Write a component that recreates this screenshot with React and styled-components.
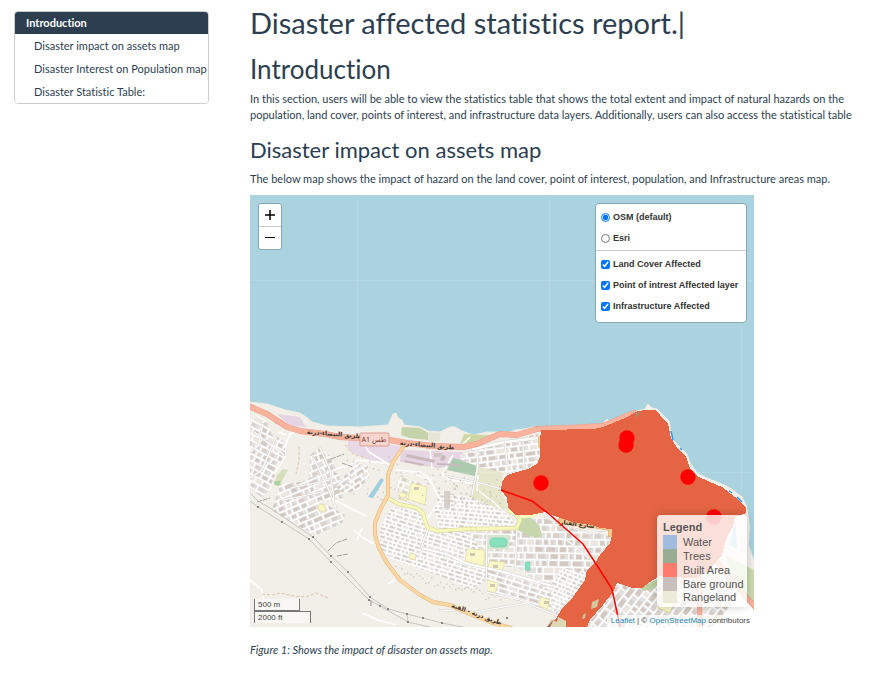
import React from "react";
import styled, { createGlobalStyle } from "styled-components";

const GlobalStyle = createGlobalStyle`
  *, *::before, *::after { box-sizing: border-box; }
  body {
    margin: 0;
    background: #fff;
    color: #2c3e50;
    font: 400 11px/16px Lato, "Liberation Sans", sans-serif;
    font-variant-ligatures: none;
  }
`;

const Page = styled.div`
  display: grid;
  grid-template-columns: 195px minmax(0, 1fr);
  column-gap: 41px;
  align-items: start;
  padding: 0 28px 0 14px;
`;

const Toc = styled.nav`
  display: flex;
  flex-direction: column;
  margin-top: 11px;
  border: 1px solid #ccc;
  border-radius: 4px;
  overflow: hidden;
`;

const TocLink = styled.a`
  padding: ${(p) => (p.$active ? "3px 0 3px 11px" : "4px 0 3px 19px")};
  line-height: 16px;
  white-space: nowrap;
  text-decoration: none;
  color: ${(p) => (p.$active ? "#fff" : "#2c3e50")};
  background: ${(p) => (p.$active ? "#2c3e50" : "#fff")};
  font-weight: ${(p) => (p.$active ? 700 : 400)};
`;

const Report = styled.main`
  display: flex;
  flex-direction: column;
`;

const Title = styled.h1`
  margin: 5px 0 0;
  font-size: 29px;
  line-height: 36px;
  font-weight: 400;
`;

const SectionTitle = styled.h2`
  margin: 12px 0 0;
  font-size: 26px;
  line-height: 32px;
  font-weight: 400;
`;

const SubTitle = styled.h3`
  margin: 11px 0 0;
  font-size: 22px;
  line-height: 32px;
  font-weight: 400;
`;

const Text = styled.p`
  margin: ${(p) => (p.$close ? 5 : 6)}px 0 0;
`;

const Figure = styled.figure`
  margin: 8px 0 0;
`;

const Caption = styled.figcaption`
  margin-top: 15px;
  font-style: italic;
`;

const MapFrame = styled.div`
  position: relative;
  max-width: 504px;
  overflow: hidden;
  background: #aad3df;
  font-family: "Liberation Sans", Arial, sans-serif;
`;

const MapSvg = styled.svg`
  display: block;
  width: 100%;
  height: auto;
`;

const ZoomBar = styled.div`
  position: absolute;
  top: 8px;
  left: 8px;
  display: flex;
  flex-direction: column;
  width: 24px;
  border: 1px solid #87a8b2;
  border-radius: 3px;
  overflow: hidden;
`;

const ZoomButton = styled.button`
  display: grid;
  place-items: center;
  height: 22px;
  padding: 0;
  border: 0;
  background: #fff;
  & + & { border-top: 1px solid #ccc; height: 23px; }
`;

const LayerPanel = styled.form`
  position: absolute;
  top: 8px;
  right: 7px;
  width: 152px;
  border: 1px solid #87a8b2;
  border-radius: 4px;
  background: #fff;
  color: #333;
  font-size: 9px;
  font-weight: 700;
`;

const LayerGroup = styled.fieldset`
  margin: 0;
  padding: ${(p) => (p.$overlays ? "3px 5px 5px" : "3px 5px 1px")};
  border: 0;
  border-top: ${(p) => (p.$overlays ? "1px solid #ccc" : "0")};
`;

const LayerLabel = styled.label`
  display: flex;
  align-items: center;
  gap: 3px;
  height: 21px;
  line-height: 21px;
  white-space: nowrap;
  input { width: 9px; height: 9px; margin: 0; accent-color: #0075ff; }
`;

const Legend = styled.section`
  position: absolute;
  right: 7px;
  bottom: 20px;
  width: 90px;
  padding: 5px 4px 4px 6px;
  border-radius: 4px;
  background: rgba(255, 255, 255, 0.8);
  box-shadow: 0 0 10px rgba(0, 0, 0, 0.2);
  color: #555;
  font-size: 11px;
`;

const LegendTitle = styled.h4`
  margin: 0 0 1px;
  font-size: 11px;
  line-height: 14px;
`;

const LegendList = styled.ul`
  margin: 0;
  padding: 0;
  list-style: none;
`;

const LegendItem = styled.li`
  display: flex;
  gap: 6px;
  line-height: 14px;
  height: 14px;
  white-space: nowrap;
  &:last-child { height: 12px; line-height: 12px; }
`;

const Swatch = styled.span`
  flex: none;
  width: 14px;
  background: ${(p) => p.$color};
`;

const Scale = styled.div`
  position: absolute;
  left: 4px;
  bottom: 4px;
  color: #444;
  font-size: 8px;
`;

const ScaleLine = styled.div`
  width: ${(p) => p.$width}px;
  height: 12px;
  padding-left: 3px;
  line-height: 12px;
  border: solid #777;
  border-width: ${(p) => (p.$lower ? "1px 1px 0" : "0 1px 1px")};
  background: rgba(255, 255, 255, 0.5);
`;

const Attribution = styled.div`
  position: absolute;
  right: 0;
  bottom: 0;
  padding: 0 4px;
  background: rgba(255, 255, 255, 0.7);
  color: #444;
  font-size: 8px;
  line-height: 12px;
  white-space: nowrap;
  a { color: #2a8ab5; text-decoration: none; }
`;

const noise = (n) => {
  const v = Math.sin(n * 12.9898) * 43758.5453;
  return v - Math.floor(v);
};

/* A district: an outline filled with streets and irregular building blocks. */
function District({ id, points, cx, cy, w, h, angle = 0, bw = 7, bh = 5, fill = "#e3e1df" }) {
  const blocks = [];
  let n = cx + cy;
  for (let y = -h / 2; y < h / 2; y += bh) {
    for (let x = -w / 2; x < w / 2; ) {
      const size = bw * (0.6 + noise(n++) * 0.9);
      const k = noise(n++);
      blocks.push(
        <g key={n}>
          <rect x={x} y={y} width={size - 1.4} height={bh - 1.5} fill={k > 0.75 ? "#ebe7e0" : fill} />
          {k < 0.8 && (
            <rect x={x + 0.6} y={y + 0.6} width={Math.max(1, (size - 2.6) * (0.5 + k * 0.6))} height={bh - 2.7} fill={k > 0.4 ? "#d3c9c2" : "#dad1cb"} />
          )}
        </g>
      );
      x += size;
    }
  }
  return (
    <g>
      <clipPath id={id}><polygon points={points} /></clipPath>
      <g clipPath={`url(#${id})`}>
        <polygon points={points} fill="#fff" />
        <g transform={`translate(${cx} ${cy}) rotate(${angle})`}>{blocks}</g>
      </g>
    </g>
  );
}

function Road({ d, width = 2, color = "#fff", casing = "#d8d4d0" }) {
  return (
    <g fill="none" strokeLinejoin="round" strokeLinecap="round">
      <path d={d} stroke={casing} strokeWidth={width + 1} />
      <path d={d} stroke={color} strokeWidth={width} />
    </g>
  );
}

const COAST =
  "M250 402L267 404 276 407 285 410 300 413 306 417 312 422 327 426 360 427 388 425 391 419 393 414 396 413 398 418 402 420 404 425 420 427 428 431 440 432 450 427 455 427 462 431 473 435 487 432 500 432 510 432 515 430 525 429 533 427 543 428 567 427 593 428 601 425 607 419 610 422 623 415 633 412 645 409 648 404 652 408 657 409 662 414 669 421 671 432 673 440 687 454 690 463 697 473 707 478 717 482 730 488 742 497 747 507 751 518 754 527V627H250Z";

const HAZARD =
  "M541 430L593 429 603 427 625 418 638 411 645 410 655 410 660 415 668 424 671 438 676 446 686 457 690 468 697 476 710 482 722 487 735 497 746 507 746 513 735 517 733 527 728 535 725 543 722 555 712 567 707 572 697 578 683 578 670 574 660 576 650 582 642 588 633 588 617 583 613 592 603 605 590 620 587 627H547L557 617 563 607 573 597 585 580 587 570 595 563 600 555 610 543 612 535 612 529 600 528 592 525 572 522 557 517 545 512 530 515 515 515 508 508 507 498 501 490 502 482 507 475 517 472 528 469 537 464 540 457 540 440Z";

const TOWERS = [
  [258, 507], [282, 522], [309, 539], [331, 562], [369, 600], [380, 606], [408, 622],
  [313, 537], [331, 556], [348, 572], [370, 597], [388, 609], [407, 614], [423, 618], [442, 623], [507, 618],
];

const MARKERS = [[541, 483], [627, 438], [626, 445], [688, 477], [714, 517]];

const SCHOOLS = [
  "467,549 485,550 484,566 465,561",
  "490,561 505,562 502,571 488,568",
  "487,580 498,583 495,593 486,590",
  "541,597 550,600 547,609 539,606",
  "411,483 427,487 425,505 408,499",
  "400,492 407,494 406,501 399,499",
  "319,504 325,505 325,512 318,510",
  "410,553 416,555 415,560 409,558",
];

function RoadName({ x, y, angle, halo = "#f5b39c", children }) {
  return (
    <text
      x={x}
      y={y}
      transform={`rotate(${angle} ${x} ${y})`}
      textAnchor="middle"
      fontFamily='"DejaVu Sans", sans-serif'
      fontSize="6"
      fontWeight="700"
      fill="#333"
      stroke={halo}
      strokeWidth="1"
      paintOrder="stroke"
    >
      {children}
    </text>
  );
}

function MapDrawing() {
  return (
    <MapSvg viewBox="250 195 504 432" role="img" aria-label="Hazard impact map of the coast">
      <rect x="250" y="195" width="504" height="432" fill="#aad3df" />
      <path d={COAST} fill="#f2efe9" stroke="#f0ece3" strokeWidth="1" />

      {/* land use */}
      <g>
        <polygon points="277,414 300,417 306,427 290,426" fill="#e6d5e2" />
        <polygon points="349,440 401,446 392,463 370,460 352,453 347,446" fill="#e8d9e6" />
        <polygon points="401,450 463,452 464,466 438,468 400,462" fill="#e6d6e3" />
        <path d="M402 427L420 428 428 433 428 440 410 438 401 435Z" fill="#c5d3aa" />
        <path d="M428 432L441 433 439 442 428 441Z" fill="#e6e5d8" />
        <path d="M464 434L485 435 500 434 490 441 475 445 460 445Z" fill="#ced7a4" />
        <polygon points="453,458 478,465 475,476 447,470" fill="#aacbaf" />
        <polygon points="477,467 503,470 501,490 508,508 495,511 470,497" fill="#e6e6ca" />
        <path d="M277 475L283 469 288 470 283 479 280 485 274 485Z" fill="#d5dfbd" />
        <path d="M274 481L281 481 279 486 275 485Z" fill="#a9d39c" />
        <path d="M381 478L384 480 373 498 368 497Z" fill="#9dcfdf" />
        <polygon points="272,418 283,420 284,426 275,424" fill="#d6dcca" />
      </g>

      {/* minor country streets */}
      <g fill="none" stroke="#fff" strokeWidth="1.5" strokeLinejoin="round">
        <path d="M286 435L278 432M283 452L290 434 300 430M270 490L272 478 285 457 283 447M360 438L369 452 385 462 392 466M332 470L350 465 357 460 384 463M335 500L350 508 366 516M362 528L357 540M354 530L362 537 374 544M395 580L388 584M250 580L262 590 264 605 262 615M362 613L378 620 396 625M453 455L442 474 450 480 480 484M410 562L419 566 430 568 440 575 452 578 470 590M425 522L440 500 430 480 410 472" />
        <path d="M478 475L477 490 495 503 502 511M460 447L470 437M395 470L420 472 432 480M430 450L432 468" />
      </g>

      <District id="west" points="250,420 258,416 268,422 271,433 282,440 286,452 278,466 270,488 263,498 250,488" cx={268} cy={458} w={110} h={110} angle={28} bw={8} bh={6} />
      <District id="north-village" points="320,448 331,457 337,472 320,480 309,476 310,455" cx={320} cy={466} w={50} h={50} angle={-22} bw={10} bh={7} />
      <District id="center-west" points="302,482 330,469 339,475 344,500 318,500 345,515 342,523 325,531 315,536 272,510 280,484" cx={310} cy={503} w={110} h={100} angle={-23} bw={9} bh={6} />
      <District id="round" points="345,475 358,462 368,466 369,477 360,489 344,494 336,487" cx={354} cy={478} w={56} h={56} angle={-35} bw={7} bh={5} />
      <District id="south" points="393,506 416,511 423,517 426,532 470,532 485,551 487,580 470,590 446,578 400,562 382,556 378,540 384,518" cx={430} cy={547} w={150} h={130} angle={17} bw={6} bh={4} />
      <District id="mid" points="398,475 425,484 427,506 398,496" cx={412} cy={490} w={60} h={55} angle={18} bw={7} bh={6} fill="#ededda" />
      <District id="old-town" points="441,493 470,497 506,512 516,524 498,529 438,529 434,510" cx={474} cy={512} w={100} h={60} angle={5} bw={5} bh={4} />
      <District id="center" points="470,532 518,530 516,568 487,563" cx={494} cy={548} w={60} h={50} angle={2} bw={8} bh={6} fill="#e6e2dc" />
      <District id="south-east" points="487,568 540,582 560,590 557,615 525,603 486,590" cx={522} cy={590} w={100} h={70} angle={17} bw={9} bh={5} />
      <District id="east" points="518,523 540,517 585,533 611,530 608,546 588,570 585,582 560,612 548,590 516,566" cx={565} cy={560} w={120} h={110} angle={1} bw={9} bh={7} />
      <District id="east-grid" points="560,568 586,572 584,581 565,607 552,612 550,588" cx={568} cy={590} w={60} h={60} angle={22} bw={5} bh={4} />
      <District id="north-east" points="460,455 478,450 505,441 538,434 540,460 528,468 507,474 480,467 462,461" cx={500} cy={455} w={100} h={60} angle={-7} bw={8} bh={6} />
      <District id="south-tip" points="617,583 642,589 670,575 754,580 754,627 585,627 603,606" cx={660} cy={605} w={210} h={110} angle={-52} bw={10} bh={7} />

      {/* industrial sheds */}
      <g fill="#c9b9bd">
        <path d="M407 454L435 460 434 463 406 457ZM405 460L424 464 423 466 404 462ZM437 463L460 464 460 466 437 465ZM442 455L446 456 444 461 440 460Z" />
        <rect x="434" y="453" width="8" height="4" fill="#cfc5c2" />
        <rect x="444" y="491" width="6" height="17" fill="#d8cfc8" />
        <rect x="370" y="600" width="2" height="6" />
      </g>

      {/* parks and pitches */}
      <path d="M518 518L530 517 539 525 542 535 536 538 519 531Z" fill="#c8d6ad" />
      <rect x="488" y="535" width="21" height="14" fill="#d3e6cf" />
      <rect x="490" y="538" width="17" height="9" rx="4" fill="#88e0be" stroke="#72c9a9" strokeWidth="0.7" />
      <rect x="525" y="562" width="5" height="8" fill="#88e0be" stroke="#72c9a9" strokeWidth="0.5" />
      <g fill="#fbf8c8" stroke="#dcd5a0" strokeWidth="0.6">
        {SCHOOLS.map((points) => <polygon key={points} points={points} />)}
      </g>
      <g fill="#d2c5b4">
        {SCHOOLS.slice(0, 5).map((points) => {
          const [x, y] = points.split(" ")[0].split(",").map(Number);
          return <rect key={points} x={x + 3} y={y + 4} width="5" height="3" />;
        })}
      </g>
      <path d="M664 596L675 601 670 613 658 608Z" fill="#fbf8c8" stroke="#dcd5a0" />
      <path d="M640 588L665 575 655 588 644 591Z" fill="#bdd1a0" />
      <path d="M725 555L754 570V610L735 585Z" fill="#cbdab0" />

      {/* scattered buildings */}
      <g fill="#d0c5bd">
        {Array.from({ length: 110 }, (_, i) => {
          const x = i % 2 ? 345 + noise(i) * 100 : 445 + noise(i) * 55;
          const y = i % 2 ? 455 + noise(i + 300) * 45 : 476 + noise(i + 300) * 30;
          return <rect key={i} x={x} y={y} width={1 + noise(i + 7)} height="1.5" />;
        })}
        {Array.from({ length: 36 }, (_, i) => (
          <rect key={i} x={395 + i * 3} y={566 + i * 0.8 + noise(i) * 9} width="1.5" height="1.2" />
        ))}
      </g>

      {/* paths and power lines */}
      <g fill="none" stroke="#d0ba8f" strokeWidth="0.8" strokeDasharray="3 2">
        <path d="M262 594L272 595 280 593 294 596 306 597 316 593 328 598M299 447L299 460 296 474M345 445L353 454 366 458" />
      </g>
      <path d="M328 551L336 543 347 539M337 556L348 554M331 459L344 454M342 463L353 467M257 502L270 498" fill="none" stroke="#8a8a8a" strokeWidth="0.8" strokeDasharray="5 1" />
      <g fill="none" stroke="#bab9b5" strokeWidth="0.8">
        <path d="M250 493L258 501 270 508 313 537 331 556 348 572 370 597 388 609 407 614 423 618 442 623 463 627" />
        <path d="M250 501L258 507 282 522 309 539 331 562 369 600 380 606 408 622 430 627M407 614L408 622" />
      </g>
      <g fill="#858585">
        {TOWERS.map(([x, y]) => <rect key={`${x}-${y}`} x={x - 1} y={y - 1} width="2" height="2" />)}
      </g>

      {/* main streets */}
      <Road d="M263 424L258 446 250 452M276 437L262 470 250 478M254 432L284 455M313 457L327 486 336 508M291 488L330 480M283 500L322 492M320 448L330 470 334 500" width={1.2} />
      <Road d="M389 498L407 503 425 512" width={1.8} />
      <Road d="M421 548L446 554 468 564 500 571 552 586" width={2.2} />
      <Road d="M446 476L480 483 502 489M428 529L421 548M517 530L515 570M487 530L486 592L520 600 560 617M440 610L475 612 533 602" width={1.2} />
      <Road d="M473 449L505 442 538 438" width={2.5} />
      <Road d="M478 452L477 471 472 495M505 443L507 464M523 442L524 468M460 448L480 454M545 517L570 526 608 535M564 538L589 558" width={1.2} />
      <path d="M388 498L399 504 417 508 423 513 427 527 437 531 467 529 517 528 520 520 515 514 507 510" fill="none" stroke="#d7d18d" strokeWidth="4" strokeLinejoin="round" />
      <path d="M388 498L399 504 417 508 423 513 427 527 437 531 467 529 517 528 520 520 515 514 507 510M520 517L532 516 540 512" fill="none" stroke="#f6f7bb" strokeWidth="3" strokeLinejoin="round" />
      <Road d="M403 447L393 462 388 475 388 495 380 510 375 523 375 535 379 548 387 563 400 580 420 595 433 602 450 605 467 613 490 622 511 628" width={3} color="#fcd6a4" casing="#dfb578" />
      <Road d="M540 438L540 446" width={3} color="#f6d09e" casing="#dfb069" />
      <Road d="M560 520L580 524 600 527 611 529 610 535" width={3} color="#f9c68f" casing="#dca15e" />
      <Road d="M248 406L267 414 287 427 300 431 325 434 340 437 390 440 407 443 433 446 463 447 477 444 500 434 517 435 537 429 567 428 603 426 634 413" width={5} color="#f9b29c" casing="#e8a092" />
      <Road d="M695 570L701 555 710 552 718 563 740 590 756 608M699 565L700 627" width={4} color="#f9b29c" casing="#e58f80" />

      <RoadName x={334} y={436} angle={5}>طريق البيضاء-درنة</RoadName>
      <RoadName x={427} y={447} angle={5}>طريق البيضاء-درنة</RoadName>
      <RoadName x={476} y={616} angle={20} halo="#fcd6a4">طريق درنة - القبة</RoadName>
      <RoadName x={577} y={526} angle={7} halo="#f9c68f">شارع الفنار</RoadName>
      <rect x="360" y="433" width="29" height="13" rx="1" fill="#f7d5cd" stroke="#dba193" />
      <text x="374" y="442" textAnchor="middle" fontFamily='"Noto Sans", "DejaVu Sans", sans-serif' fontSize="7" fill="#733">A1 طس</text>

      {/* affected land cover */}
      <path d={HAZARD} fill="#e46443" shapeRendering="crispEdges" />
      <path d="M592 602L599 599 597 607 591 609ZM583 615L586 613 585 618 582 619Z" fill="#d5c59c" />
      <path d="M547 627L551 619 557 622 558 617 566 621 566 627Z" fill="#ddd7b6" />
      <path d="M547 627L554 619 550 627Z" fill="#a3644c" />
      <path d="M633 413L641 412 637 418Z" fill="#bd8064" />
      <path d="M671 431L673 440M680 448L682 450M729 491L732 493M737 497L742 502" fill="none" stroke="#3598e5" strokeWidth="1.5" />
      <path d="M691 468L698 475 710 481 725 486" fill="none" stroke="#f4f0e9" strokeWidth="1.5" />
      <path d="M747 507L754 513V560L749 545 750 525Z" fill="#aad3df" />
      <path d="M735 520L730 545 737 549 736 530Z" fill="#9fcfe8" />

      <polyline points="501,490 532,501 549,514 583,544 598,567 612,589 618,617 620,627" fill="none" stroke="#ff0000" strokeWidth="1.5" />
      {MARKERS.map(([x, y]) => <circle key={`${x}-${y}`} cx={x} cy={y} r="7.7" fill="#ff0000" />)}

      {/* tile seams */}
      <path d="M357.500 195V627M549.500 195V428M741.500 195V495M250 280.500H754M250 472.500H500M692 472.500H754" stroke="#fff" strokeOpacity="0.12" />
    </MapSvg>
  );
}

const SECTIONS = [
  ["Introduction", "#introduction"],
  ["Disaster impact on assets map", "#assets"],
  ["Disaster Interest on Population map", "#population"],
  ["Disaster Statistic Table:", "#table"],
];

const BASE_LAYERS = ["OSM (default)", "Esri"];
const OVERLAYS = ["Land Cover Affected", "Point of intrest Affected layer", "Infrastructure Affected"];

const LAND_COVER = [
  ["Water", "#9fbbdd"],
  ["Trees", "#98ad92"],
  ["Built Area", "#fd7a6c"],
  ["Bare ground", "#c9bfba"],
  ["Rangeland", "#ecead8"],
];

export default function App() {
  return (
    <>
      <GlobalStyle />
      <Page>
        <Toc aria-label="Contents">
          {SECTIONS.map(([label, href], i) => (
            <TocLink key={href} href={href} $active={i === 0}>{label}</TocLink>
          ))}
        </Toc>
        <Report>
          <Title>Disaster affected statistics report.|</Title>
          <SectionTitle id="introduction">Introduction</SectionTitle>
          <Text>
            In this section, users will be able to view the statistics table that shows the total extent and impact of
            natural hazards on the population, land cover, points of interest, and infrastructure data layers.
            Additionally, users can also access the statistical table
          </Text>
          <SubTitle id="assets">Disaster impact on assets map</SubTitle>
          <Text $close>
            The below map shows the impact of hazard on the land cover, point of interest, population, and
            Infrastructure areas map.
          </Text>
          <Figure>
            <MapFrame>
              <MapDrawing />
              <ZoomBar>
                <ZoomButton type="button" aria-label="Zoom in">
                  <svg width="10" height="10" viewBox="0 0 10 10"><path d="M0 5H10M5 0V10" stroke="#000" strokeWidth="1.500" /></svg>
                </ZoomButton>
                <ZoomButton type="button" aria-label="Zoom out">
                  <svg width="10" height="10" viewBox="0 0 10 10"><path d="M0 4.500H10" stroke="#000" /></svg>
                </ZoomButton>
              </ZoomBar>
              <LayerPanel>
                <LayerGroup aria-label="Base layers">
                  {BASE_LAYERS.map((name, i) => (
                    <LayerLabel key={name}>
                      <input type="radio" name="base" defaultChecked={i === 0} />
                      {name}
                    </LayerLabel>
                  ))}
                </LayerGroup>
                <LayerGroup $overlays aria-label="Overlays">
                  {OVERLAYS.map((name) => (
                    <LayerLabel key={name}>
                      <input type="checkbox" defaultChecked />
                      {name}
                    </LayerLabel>
                  ))}
                </LayerGroup>
              </LayerPanel>
              <Legend>
                <LegendTitle>Legend</LegendTitle>
                <LegendList>
                  {LAND_COVER.map(([name, color]) => (
                    <LegendItem key={name}><Swatch $color={color} />{name}</LegendItem>
                  ))}
                </LegendList>
              </Legend>
              <Scale>
                <ScaleLine $width={46}>500 m</ScaleLine>
                <ScaleLine $width={57} $lower>2000 ft</ScaleLine>
              </Scale>
              <Attribution>
                <a href="#leaflet">Leaflet</a> | © <a href="#osm">OpenStreetMap</a> contributors
              </Attribution>
            </MapFrame>
            <Caption>Figure 1: Shows the impact of disaster on assets map.</Caption>
          </Figure>
        </Report>
      </Page>
    </>
  );
}
